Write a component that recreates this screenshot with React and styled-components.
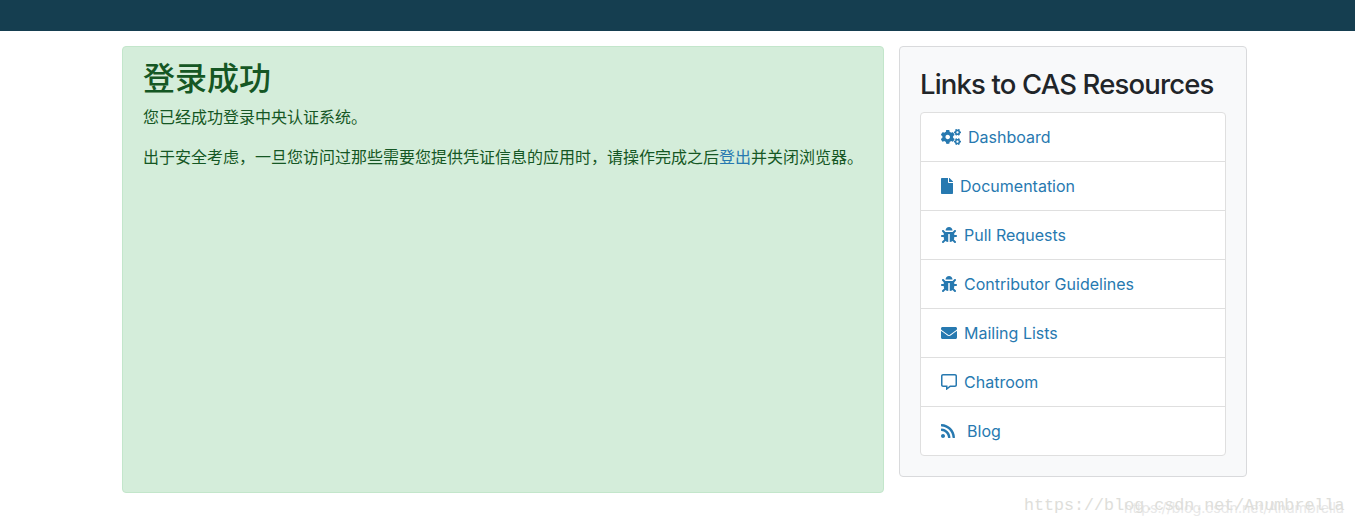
import styled, { createGlobalStyle } from "styled-components";
import {
  FaCogs,
  FaFile,
  FaBug,
  FaEnvelope,
  FaRegCommentAlt,
  FaRss,
} from "react-icons/fa";

const GlobalStyle = createGlobalStyle`
  * {
    box-sizing: border-box;
  }
  html, body {
    margin: 0;
    background-color: #fff;
  }
  body {
    font-family: Inter, "Noto Sans CJK SC", sans-serif;
    font-size: 16px;
    line-height: 1.5;
    color: #212529;
  }
`;

const Page = styled.div`
  position: relative;
  height: 525px;
  overflow: hidden;
`;

const TopBar = styled.header`
  height: 31px;
  background-color: #153e50;
`;

const Main = styled.main`
  display: flex;
  align-items: flex-start;
  gap: 15px;
  padding: 15px 108px 0 122px;
`;

const Alert = styled.section`
  flex: 0 0 762px;
  height: 447px;
  padding: 10px 20px 12px;
  background-color: #d4edda;
  border: 1px solid #c3e6cb;
  border-radius: 4px;
  color: #155724;
  font-family: "Noto Sans CJK SC", sans-serif;
`;

const AlertTitle = styled.h2`
  margin: 0 0 9px;
  font-size: 32px;
  font-weight: 500;
  line-height: 1.2;
`;

const AlertText = styled.p`
  margin: 0 0 16px;
  font-size: 16px;
  line-height: 24px;
  white-space: nowrap;
`;

const AlertLink = styled.a`
  color: #2779b0;
  text-decoration: none;
`;

const Card = styled.aside`
  flex: 0 0 348px;
  padding: 20px;
  background-color: #f8f9fa;
  border: 1px solid #d9dadc;
  border-radius: 4px;
`;

const CardTitle = styled.h4`
  margin: 1px 0 11px;
  font-size: 27.5px;
  font-weight: 500;
  line-height: 1.2;
  letter-spacing: -0.85px;
  color: #212529;
`;

const LinkList = styled.ul`
  margin: 0;
  padding: 0;
  list-style: none;
  background-color: #fff;
  border: 1px solid #dfdfdf;
  border-radius: 4px;
`;

const LinkItem = styled.li`
  height: 49px;
  border-bottom: 1px solid #dfdfdf;

  &:last-child {
    height: 48px;
    border-bottom: none;
  }
`;

const ResourceLink = styled.a`
  display: flex;
  align-items: center;
  gap: ${(props) => props.$gap || 7}px;
  height: 100%;
  padding: 0 20px;
  color: #2779b0;
  font-size: 16px;
  text-decoration: none;

  svg {
    flex: none;
    height: 16px;
  }
`;

const Watermark = styled.div`
  position: absolute;
  white-space: nowrap;
  pointer-events: none;
`;

const BigMark = styled(Watermark)`
  left: 1024px;
  top: 495px;
  color: #dededa;
  font-family: "Liberation Mono", monospace;
  font-size: 16.7px;
  line-height: 22px;
`;

const SmallMark = styled(Watermark)`
  left: 1124px;
  top: 499px;
  color: #e8e8e8;
  font-family: Inter, sans-serif;
  font-size: 14.2px;
  line-height: 18px;
`;

const links = [
  { label: "Dashboard", icon: <FaCogs size={20} /> },
  { label: "Documentation", icon: <FaFile size={12} /> },
  { label: "Pull Requests", icon: <FaBug size={16} /> },
  { label: "Contributor Guidelines", icon: <FaBug size={16} /> },
  { label: "Mailing Lists", icon: <FaEnvelope size={16} /> },
  { label: "Chatroom", icon: <FaRegCommentAlt size={16} /> },
  { label: "Blog", icon: <FaRss size={14} />, gap: 12 },
];

const App = () => {
  return (
    <Page>
      <GlobalStyle />
      <TopBar />
      <Main>
        <Alert>
          <AlertTitle>登录成功</AlertTitle>
          <AlertText>您已经成功登录中央认证系统。</AlertText>
          <AlertText>
            出于安全考虑，一旦您访问过那些需要您提供凭证信息的应用时，请操作完成之后
            <AlertLink href="#">登出</AlertLink>
            并关闭浏览器。
          </AlertText>
        </Alert>
        <Card>
          <CardTitle>Links to CAS Resources</CardTitle>
          <LinkList>
            {links.map((link) => (
              <LinkItem key={link.label}>
                <ResourceLink href="#" $gap={link.gap}>
                  {link.icon}
                  {link.label}
                </ResourceLink>
              </LinkItem>
            ))}
          </LinkList>
        </Card>
      </Main>
      <SmallMark>https://blog.csdn.net/Anumbrella</SmallMark>
      <BigMark>https://blog.csdn.net/Anumbrella</BigMark>
    </Page>
  );
};

export default App;
